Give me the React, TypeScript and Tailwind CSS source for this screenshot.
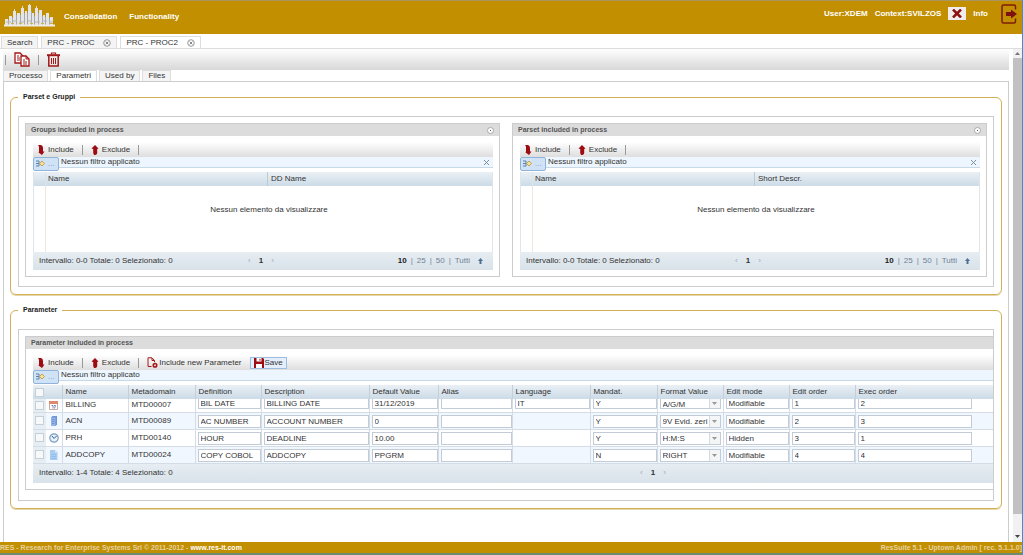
import { ReactNode } from 'react';
import clsx from 'clsx';

interface Parameter {
  id: string;
  icon: 'date' | 'server' | 'clock' | 'copy';
  metadomain: string;
  definition: string;
  description: string;
  defaultValue: string;
  language?: string;
  mandatory: string;
  format: string;
  editMode: string;
  editOrder: number;
  execOrder: number;
}

const parameters: Parameter[] = [
  { id: 'BILLING', icon: 'date', metadomain: 'MTD00007', definition: 'BIL DATE', description: 'BILLING DATE', defaultValue: '31/12/2019', language: 'IT', mandatory: 'Y', format: 'A/G/M', editMode: 'Modifiable', editOrder: 1, execOrder: 2 },
  { id: 'ACN', icon: 'server', metadomain: 'MTD00089', definition: 'AC NUMBER', description: 'ACCOUNT NUMBER', defaultValue: '0', mandatory: 'Y', format: '9V Evid. zeri', editMode: 'Modifiable', editOrder: 2, execOrder: 3 },
  { id: 'PRH', icon: 'clock', metadomain: 'MTD00140', definition: 'HOUR', description: 'DEADLINE', defaultValue: '10.00', mandatory: 'Y', format: 'H:M:S', editMode: 'Hidden', editOrder: 3, execOrder: 1 },
  { id: 'ADDCOPY', icon: 'copy', metadomain: 'MTD00024', definition: 'COPY COBOL', description: 'ADDCOPY', defaultValue: 'PPGRM', mandatory: 'N', format: 'RIGHT', editMode: 'Modifiable', editOrder: 4, execOrder: 4 },
];

const columns = [
  { label: 'Name', width: 'w-[66px]' },
  { label: 'Metadomain', width: 'w-[67px]' },
  { label: 'Definition', width: 'w-[66px]' },
  { label: 'Description', width: 'w-[108px]' },
  { label: 'Default Value', width: 'w-[69px]' },
  { label: 'Alias', width: 'w-[74px]' },
  { label: 'Language', width: 'w-[78px]' },
  { label: 'Mandat.', width: 'w-[67px]' },
  { label: 'Format Value', width: 'w-[66px]' },
  { label: 'Edit mode', width: 'w-[66px]' },
  { label: 'Edit order', width: 'w-[66px]' },
  { label: 'Exec order', width: '' },
];

function Logo() {
  return (
    <svg viewBox="0 0 52 24" className="h-6 w-[52px]" aria-hidden="true">
      <path d="M1 15h3v6H1zM5 12h3v9H5zM9 7h3v14H9zM13 9h3v12h-3zM17 4h3v17h-3zM21 7h2v14h-2zM24 1h3v20h-3zM28 9h2v12h-2zM31 4h3v17h-3zM35 6h3v15h-3zM39 11h2v10h-2zM42 9h3v12h-3zM46 13h3v8h-3z" fill="#e4e5e6" />
      <path d="M4 16h1v5H4zM8 14h1v7H8zM12 11h1v10h-1zM16 11h1v10h-1zM20 9h1v12h-1zM23 9h1v12h-1zM27 7h1v14h-1zM30 12h1v9h-1zM34 9h1v12h-1zM38 12h1v9h-1zM41 13h1v8h-1zM45 14h1v7h-1z" fill="#a9a8a8" />
      <path d="M18.500 2v3M25.500 0v3M32.500 2v3M10.500 5v3" stroke="#dedfe2" strokeWidth="1" />
      <path d="M2 18h5M9 17h4M15 18h6M24 17h4M31 18h5M38 17h5M45 18h4" stroke="#b9b7ae" strokeWidth="1" />
      <path d="M7 19.500h3M15 19.500h3M26 19.500h3M37 19.500h3M46 19.500h3" stroke="#c9b648" strokeWidth="1" />
      <path d="M0 21.500h51" stroke="#efece4" strokeWidth="2" />
    </svg>
  );
}

function LogoutIcon() {
  return (
    <svg viewBox="0 0 16 20" className="h-5 w-4" aria-hidden="true">
      <path d="M14.500 5.500V2.500Q14.500 1 13 1H2.500Q1 1 1 2.500v15Q1 19 2.500 19H13q1.500 0 1.500-1.500v-3" fill="none" stroke="#7d1d08" strokeWidth="1.500" />
      <path d="M5 8h5V5.500l6 4.500-6 4.500V12H5z" fill="#7d1010" />
    </svg>
  );
}

function CopyIcon() {
  return (
    <svg viewBox="0 0 16 15" className="h-[15px] w-4" fill="#fff" stroke="#a31818" aria-hidden="true">
      <path d="M1 1h5l3 3v7H1z" strokeWidth="1.300" />
      <path d="M3 4h2M3 6h3M3 8h3" />
      <path d="M7 4h5l3 3v7H7z" strokeWidth="1.300" />
      <path d="M12 4v3h3M9 8h2M9 10h4M9 12h4" fill="none" />
    </svg>
  );
}

function TrashIcon() {
  return (
    <svg viewBox="0 0 13 15" className="h-[15px] w-[13px]" fill="none" stroke="#a31818" aria-hidden="true">
      <path d="M4.500 2.500V1h4v1.500" strokeWidth="1.200" />
      <path d="M0 3.200h13" strokeWidth="2" />
      <path d="M1.800 4v10h9.400V4" strokeWidth="1.500" />
      <path d="M4.500 6v6M6.500 6v6M8.500 6v6" />
    </svg>
  );
}

function IncludeIcon() {
  return (
    <svg viewBox="0 0 8 10" className="h-[10px] w-2" aria-hidden="true">
      <path d="M1 0h3Q6 .5 6 3v3.500h1.500L5 10 1.500 7.500 2 6.500V2Q2 .8 1 0z" fill="#9c0c12" />
    </svg>
  );
}

function ExcludeIcon() {
  return (
    <svg viewBox="0 0 8 10" className="h-[10px] w-2" aria-hidden="true">
      <path d="M4 0l3.500 3.500L6.200 4v4Q6 10 3 10l-.8-2V4L.5 3.500z" fill="#9c0c12" />
    </svg>
  );
}

function NewParameterIcon() {
  return (
    <svg viewBox="0 0 11 11" className="size-[11px]" fill="none" stroke="#a31818" aria-hidden="true">
      <path d="M4.500 9.500H1V.8h4l2.500 2.700V5M5 1v2.500h2.500" />
      <circle cx="8" cy="8.200" r="1.800" fill="#e8c9c9" strokeWidth="1.500" />
    </svg>
  );
}

function SaveIcon() {
  return (
    <svg viewBox="0 0 10 10" className="size-[10px]" aria-hidden="true">
      <path d="M0 0h9l1 1v9H0z" fill="#9c0c12" />
      <path d="M2.500 0h5v3.500h-5zM2 6h6v4H2z" fill="#fff" />
      <path d="M5.500.8h1v2h-1z" fill="#9c0c12" />
    </svg>
  );
}

function RowIcon({ icon }: { icon: Parameter['icon'] }) {
  if (icon === 'date') {
    return (
      <svg viewBox="0 0 9 9" className="size-[9px]" aria-hidden="true">
        <path d="M.5.500h8v8h-8z" fill="#fff" stroke="#c9a9a0" />
        <path d="M0 0h9v3H0z" fill="#dd8a6c" />
        <path d="M2.500 4.500h1.500v3M5 4.500h1.500L5.500 7.500" fill="none" stroke="#7a88b5" />
      </svg>
    );
  }
  if (icon === 'server') {
    return (
      <svg viewBox="0 0 9 10" className="h-[10px] w-[9px]" aria-hidden="true">
        <path d="M2 1.500L3.500 0H8v8.500L6.500 10H2z" fill="#6d94d6" />
        <path d="M2 1.500h4.500V10H2z" fill="#93b3e8" />
        <path d="M3 3.500h2.500M3 5.500h2.500M3 7.500h2.500" stroke="#6f95d6" />
      </svg>
    );
  }
  if (icon === 'clock') {
    return (
      <svg viewBox="0 0 10 10" className="size-[10px]" fill="none" aria-hidden="true">
        <circle cx="5" cy="5" r="4.200" fill="#e6f1fa" stroke="#7da0c4" strokeWidth="1.200" />
        <path d="M3 3l2 2.500L7.500 3" stroke="#3d5f8a" />
      </svg>
    );
  }
  return (
    <svg viewBox="0 0 9 10" className="h-[10px] w-[9px]" aria-hidden="true">
      <path d="M1 0h5l2.500 2.500V10H1z" fill="#a9cdf0" />
      <path d="M6 0v2.500h2.500z" fill="#dcecfa" />
      <path d="M2.500 4.500h4.500M2.500 6.500h4.500M2.500 8.500h4.500" stroke="#94bde8" />
    </svg>
  );
}

function CloseTab({ label }: { label: string }) {
  return (
    <button aria-label={`Close ${label}`}>
      <svg viewBox="0 0 8 8" className="size-2" fill="none" aria-hidden="true">
        <circle cx="4" cy="4" r="3.300" stroke="#999" />
        <path d="M2.600 2.600l2.800 2.800M5.400 2.600L2.600 5.400" stroke="#888" />
      </svg>
    </button>
  );
}

function ToolButton({ icon, children }: { icon: ReactNode; children: ReactNode }) {
  return (
    <button className="flex items-center gap-[3px] whitespace-nowrap">
      {icon}
      {children}
    </button>
  );
}

function Separator() {
  return <span className="h-[10px] w-px bg-[#999]" />;
}

function Fieldset({ title, children }: { title: string; children: ReactNode }) {
  return (
    <fieldset className="min-w-0 rounded-md border border-[#d3b056] px-[7px] pb-[7px] shadow-[0_1px_0_#e6d7a8]">
      <legend className="px-[5px] text-[7px] leading-[10px] font-bold text-[#222]">{title}</legend>
      <div className="mt-[14px] border border-[#ccc] pt-[6px] pl-[6px]">{children}</div>
    </fieldset>
  );
}

function FilterBar({ closable }: { closable?: boolean }) {
  return (
    <div className="flex h-[11px] items-center gap-[2px] border-b border-[#c5d9e8] bg-[#edf6fe]">
      <button
        aria-label="Filter"
        className="mt-[3px] flex h-[14px] w-[26px] shrink-0 items-center gap-[3px] rounded-xs border border-[#8fb3da] bg-[#cfe2f6] px-[2px]"
      >
        <svg viewBox="0 0 9 7" className="h-[7px] w-[9px]" fill="none" aria-hidden="true">
          <path d="M0 1h3v5H0M0 3.500h3" stroke="#5b82ad" />
          <path d="M3.500 3.500L6 1l2.500 2.500L6 6z" fill="#f3dfa0" stroke="#c9a24a" />
        </svg>
        <span className="text-[#7d9bbd]">...</span>
      </button>
      <span>Nessun filtro applicato</span>
      {closable && (
        <button aria-label="Clear filter" className="mr-1 ml-auto">
          <svg viewBox="0 0 5 5" className="size-[5px]" stroke="#7d8d9c" aria-hidden="true">
            <path d="M0 0l5 5M5 0L0 5" />
          </svg>
        </button>
      )}
    </div>
  );
}

function Pages() {
  return (
    <div className="flex items-center gap-2">
      <button className="text-[#9aa9b8]" aria-label="Previous page">‹</button>
      <b>1</b>
      <button className="text-[#9aa9b8]" aria-label="Next page">›</button>
    </div>
  );
}

function EmptyGrid({ title, secondColumn }: { title: string; secondColumn: string }) {
  return (
    <section className="min-w-0 flex-1 border border-[#ccc]">
      <div className="flex h-3 items-center justify-between bg-[#dcdcdc] px-[5px]">
        <h2 className="text-[7px] font-bold text-[#555]">{title}</h2>
        <button aria-label="Collapse" className="flex size-[7px] items-center justify-center rounded-full border border-[#aaa] bg-white">
          <span className="size-px bg-[#555]" />
        </button>
      </div>
      <div className="pt-[6px] pr-[6px] pb-[6px] pl-[7px]">
        <div className="flex h-[15px] items-center gap-2 bg-linear-to-b from-white to-[#dedede] pl-1">
          <ToolButton icon={<IncludeIcon />}>Include</ToolButton>
          <Separator />
          <ToolButton icon={<ExcludeIcon />}>Exclude</ToolButton>
          <Separator />
        </div>
        <FilterBar closable />
        <table className="mt-1 w-full table-fixed border-x border-[#dfe5ea]">
          <thead>
            <tr className="h-[14px] bg-linear-to-b from-[#eaf0f5] to-[#ccdbe7] text-left">
              <th className="w-3 border-r border-[#dbe4ec]" />
              <th className="w-[222px] border-r border-[#b9c9d6] pl-[2px] font-normal">Name</th>
              <th className="pl-[3px] font-normal">{secondColumn}</th>
            </tr>
          </thead>
          <tbody>
            <tr className="h-[66px]">
              <td className="border-r border-[#f0e6dd]" />
              <td colSpan={2} className="pb-[18px] text-center">Nessun elemento da visualizzare</td>
            </tr>
          </tbody>
        </table>
        <div className="grid h-[18px] grid-cols-[1fr_auto_1fr] items-center bg-linear-to-b from-[#e6edf3] to-[#d9e2ea] pr-[10px] pl-[6px]">
          <span className="whitespace-nowrap">Intervallo: 0-0 Totale: 0 Selezionato: 0</span>
          <Pages />
          <div className="flex items-center justify-end gap-1 text-[#6f8296]">
            <b className="text-[#222]">10</b>
            <span>|</span>
            <button>25</button>
            <span>|</span>
            <button>50</button>
            <span>|</span>
            <button>Tutti</button>
            <svg viewBox="0 0 5 6" className="ml-1 h-[6px] w-[5px]" fill="#4f6f94" aria-hidden="true">
              <path d="M2.500 0L5 3H3.500v3h-2V3H0z" />
            </svg>
          </div>
        </div>
      </div>
    </section>
  );
}

interface CellProps {
  label: string;
  value?: string | number;
  first: boolean;
  narrow?: boolean;
}

function InputCell({ label, value = '', first, narrow }: CellProps) {
  return (
    <td className="border-r border-[#d4dde6] pl-[2px] align-top last:border-r-0">
      <input
        aria-label={label}
        defaultValue={value}
        className={clsx(
          'block border border-[#c3ccd6] bg-white px-[2px]',
          first ? 'h-[10px] border-t-0' : 'mt-[2px] h-[13px]',
          narrow ? 'w-[114px]' : 'w-full'
        )}
      />
    </td>
  );
}

function ParameterRow({ param, index }: { param: Parameter; index: number }) {
  const first = index === 0;

  return (
    <tr className={clsx(first ? 'h-[13px]' : 'h-[17px]', 'border-b border-[#d4dde6]', index % 2 === 1 ? 'bg-[#f0f7fe]' : 'bg-white')}>
      <td className="bg-[#e6edf3] pl-[2px]">
        <input type="checkbox" aria-label={`Select ${param.id}`} className="block size-[9px] appearance-none border border-[#c5cfd8] bg-[#f6f8fa]" />
      </td>
      <td className="border-r border-[#d4dde6] pl-[3px]"><RowIcon icon={param.icon} /></td>
      <td className="border-r border-[#d4dde6] pl-[3px]">{param.id}</td>
      <td className="border-r border-[#d4dde6] pl-[3px]">{param.metadomain}</td>
      <InputCell label="Definition" value={param.definition} first={first} />
      <InputCell label="Description" value={param.description} first={first} />
      <InputCell label="Default value" value={param.defaultValue} first={first} />
      <InputCell label="Alias" first={first} />
      {param.language ? (
        <InputCell label="Language" value={param.language} first={first} />
      ) : (
        <td className="border-r border-[#d4dde6]" />
      )}
      <InputCell label="Mandatory" value={param.mandatory} first={first} />
      <td className="border-r border-[#d4dde6] px-[2px] align-top">
        <div className={clsx('flex border border-[#c3ccd6] bg-white', first ? 'h-[10px] border-t-0' : 'mt-[2px] h-[13px]')}>
          <select aria-label="Format value" className="min-w-0 flex-1 appearance-none pt-px pl-[2px]">
            <option>{param.format}</option>
          </select>
          <span className="flex w-[11px] items-center justify-center border-l border-[#d4dae0] bg-[#f3f5f7]">
            <svg viewBox="0 0 5 3" className="h-[3px] w-[5px]" fill="#999" aria-hidden="true">
              <path d="M0 0h5L2.500 3z" />
            </svg>
          </span>
        </div>
      </td>
      <InputCell label="Edit mode" value={param.editMode} first={first} />
      <InputCell label="Edit order" value={param.editOrder} first={first} />
      <InputCell label="Exec order" value={param.execOrder} first={first} narrow />
    </tr>
  );
}

function ParameterGrid() {
  return (
    <section className="mb-[10px] border border-r-0 border-[#ccc]">
      <div className="flex h-3 items-center bg-[#dcdcdc] px-[5px]">
        <h2 className="text-[7px] font-bold text-[#555]">Parameter included in process</h2>
      </div>
      <div className="pt-[6px] pb-[6px] pl-[7px]">
        <div className="flex h-[15px] items-center gap-2 bg-linear-to-b from-white to-[#dedede] pl-1">
          <ToolButton icon={<IncludeIcon />}>Include</ToolButton>
          <Separator />
          <ToolButton icon={<ExcludeIcon />}>Exclude</ToolButton>
          <Separator />
          <button className="flex items-center gap-px whitespace-nowrap">
            <NewParameterIcon />
            Include new Parameter
          </button>
          <button className="flex h-3 items-center gap-px border border-[#9dbde0] bg-[#e3eefa] px-[3px]">
            <SaveIcon />
            Save
          </button>
        </div>
        <FilterBar />
        <table className="mt-1 w-full table-fixed">
          <thead>
            <tr className="h-[14px] bg-linear-to-b from-[#eaf0f5] to-[#ccdbe7] text-left">
              <th className="w-[13px] pl-[2px]">
                <input type="checkbox" aria-label="Select all" className="block size-[9px] appearance-none border border-[#c5cfd8] bg-[#f6f8fa]" />
              </th>
              <th className="w-4 border-r border-[#c3d0dc]" />
              {columns.map((column) => (
                <th key={column.label} className={clsx(column.width, 'border-r border-[#c3d0dc] pl-[3px] font-normal whitespace-nowrap last:border-r-0')}>
                  {column.label}
                </th>
              ))}
            </tr>
          </thead>
          <tbody>
            {parameters.map((param, index) => (
              <ParameterRow key={param.id} param={param} index={index} />
            ))}
          </tbody>
        </table>
        <div className="flex h-[19px] items-center bg-linear-to-b from-[#e6edf3] to-[#d9e2ea] pl-[6px]">
          <span className="w-[63%]">Intervallo: 1-4 Totale: 4 Selezionato: 0</span>
          <Pages />
        </div>
      </div>
    </section>
  );
}

const tab = 'flex items-center gap-[9px] border border-b-0 border-[#ddd] bg-[#f4f4f4] px-[5px]';
const activeTab = 'flex items-center gap-[9px] border border-b-0 border-[#ddd] bg-white px-[5px]';

export default function App() {
  return (
    <div className="flex h-screen flex-col overflow-hidden border-r border-[#3b8fd6] bg-white font-['Liberation_Sans',Arial,sans-serif] text-[8px] leading-[10px] text-[#333]">
      <header className="flex h-[34px] shrink-0 items-center border-t border-[#a89560] bg-[#c28f00] pr-[5px] pl-1 font-bold text-white">
        <div className="mb-1"><Logo /></div>
        <nav className="mb-[2px] flex gap-3 pl-2">
          <a href="#consolidation">Consolidation</a>
          <a href="#functionality">Functionality</a>
        </nav>
        <div className="mb-2 ml-auto flex items-center gap-[7px]">
          <span>User:XDEM</span>
          <span>Context:SVILZOS</span>
          <button aria-label="Close context" className="flex h-[13px] w-[18px] items-center justify-center bg-[#f0ecec]">
            <svg viewBox="0 0 10 9" className="h-[9px] w-[10px]" stroke="#8c1010" strokeWidth="2.500" aria-hidden="true">
              <path d="M1 .5l8 8M9 .5l-8 8" />
            </svg>
          </button>
          <a href="#info">Info</a>
          <button aria-label="Logout" className="ml-[6px]"><LogoutIcon /></button>
        </div>
      </header>

      <div className="flex h-[15px] shrink-0 items-stretch gap-[3px] border-b border-[#ddd] pt-[2px] pl-px">
        <button className={tab}>Search</button>
        <div className={tab}>
          <button>PRC - PROC</button>
          <CloseTab label="PRC - PROC" />
        </div>
        <div className={activeTab}>
          <button>PRC - PROC2</button>
          <CloseTab label="PRC - PROC2" />
        </div>
      </div>

      <div className="flex min-h-0 flex-1">
        <main className="flex min-w-0 flex-1 flex-col pl-[3px]">
          <div className="flex h-[21px] shrink-0 items-center gap-2 bg-linear-to-b from-white to-[#d8d8d8] pl-[2px]">
            <Separator />
            <button aria-label="Copy"><CopyIcon /></button>
            <Separator />
            <button aria-label="Delete"><TrashIcon /></button>
          </div>
          <div className="flex h-[12px] shrink-0 items-stretch gap-[2px] border-b border-[#ccc]">
            <button className={tab}>Processo</button>
            <button className={activeTab}>Parametri</button>
            <button className={tab}>Used by</button>
            <button className={tab}>Files</button>
          </div>
          <div className="flex flex-1 flex-col gap-[10px] border-x border-[#ccc] px-[6px] pt-[10px]">
            <Fieldset title="Parset e Gruppi">
              <div className="flex gap-3 pr-[6px] pb-[9px]">
                <EmptyGrid title="Groups included in process" secondColumn="DD Name" />
                <EmptyGrid title="Parset included in process" secondColumn="Short Descr." />
              </div>
            </Fieldset>
            <Fieldset title="Parameter">
              <ParameterGrid />
            </Fieldset>
          </div>
        </main>
        <div className="ml-1 flex w-[9px] flex-col items-center bg-[#f1f1f1]" aria-hidden="true">
          <svg viewBox="0 0 5 3" className="my-[3px] h-[3px] w-[5px]" fill="#777"><path d="M0 3h5L2.500 0z" /></svg>
          <div className="w-full flex-1 bg-[#c1c1c1]" />
          <svg viewBox="0 0 5 3" className="mt-[21px] mb-1 h-[3px] w-[5px]" fill="#444"><path d="M0 0h5L2.500 3z" /></svg>
        </div>
      </div>

      <footer className="flex h-[13px] shrink-0 items-center justify-between border-b-2 border-[#6d8a72] bg-[#c28f00] text-[7px] font-bold text-[#e6d3a0]">
        <span>
          RES - Research for Enterprise Systems Srl © 2011-2012 -{' '}
          <a href="#res-it" className="text-white">www.res-it.com</a>
        </span>
        <span>ResSuite 5.1 - Uptown Admin [ rec. 5.1.1.0]</span>
      </footer>
    </div>
  );
}
